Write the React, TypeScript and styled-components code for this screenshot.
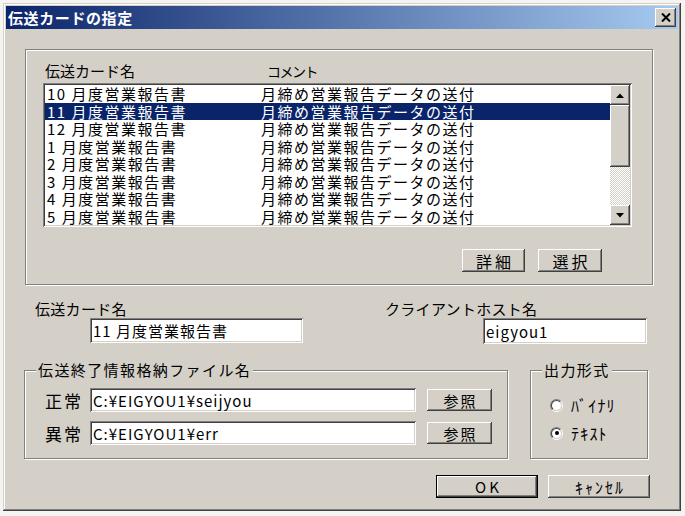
import React from 'react';
import styled, { createGlobalStyle, css } from 'styled-components';

const FACE = '#D4D0C8';
const SHADOW = '#808080';
const DARK = '#404040';
const SELECT = '#0A246A';
const FONT = `"Noto Sans CJK JP", "Noto Sans", sans-serif`;

const GlobalStyle = createGlobalStyle`
  html, body {
    margin: 0;
    padding: 0;
    background: #f4f4f2;
  }
  body {
    font-family: ${FONT};
    color: #000;
  }
  * {
    box-sizing: border-box;
  }
`;

const raised = css`
  box-shadow: inset -1px -1px ${DARK}, inset 1px 1px #fff,
    inset -2px -2px ${SHADOW}, inset 2px 2px ${FACE};
`;

const sunken = css`
  box-shadow: inset 1px 1px ${SHADOW}, inset -1px -1px #fff,
    inset 2px 2px ${DARK}, inset -2px -2px ${FACE};
`;

const Window = styled.div`
  margin: 3px 0 0 3px;
  width: 678px;
  height: 508px;
  padding: 3px;
  background: ${FACE};
  box-shadow: inset -1px -1px ${DARK}, inset 1px 1px ${FACE},
    inset -2px -2px ${SHADOW}, inset 2px 2px #fff;
  display: flex;
  flex-direction: column;
`;

const TitleBar = styled.div`
  height: 23px;
  padding: 0 2px;
  display: flex;
  align-items: center;
  justify-content: space-between;
  background: linear-gradient(90deg, ${SELECT} 0%, #A6CAF0 100%);
`;

const TitleText = styled.span`
  color: #fff;
  font-size: 15px;
  font-weight: 700;
  letter-spacing: 0.6px;
  line-height: 23px;
`;

const CloseButton = styled.div`
  width: 21px;
  height: 19px;
  background: ${FACE};
  ${raised};
  display: flex;
  align-items: center;
  justify-content: center;
`;

const Client = styled.div`
  flex: 1;
  display: flex;
  flex-direction: column;
`;

const Group = styled.div<{ $w: number; $h: number }>`
  position: relative;
  width: ${({ $w }) => $w}px;
  height: ${({ $h }) => $h}px;
  border: 1px solid ${SHADOW};
  box-shadow: inset 1px 1px #fff, 1px 1px #fff;
`;

const Legend = styled.span`
  position: absolute;
  top: -10px;
  left: 11px;
  padding: 0 2px;
  background: ${FACE};
  font-size: 15px;
  line-height: 18px;
  letter-spacing: 1.4px;
`;

const TopGroup = styled(Group)`
  margin: 20px 0 0 19px;
  padding: 12px 0 0 17px;
`;

const ListHeader = styled.div`
  display: flex;
  height: 18px;
  margin-bottom: 3px;
  padding-left: 2px;
  font-size: 15px;
  line-height: 18px;
`;

const HeaderCell = styled.span<{ $w?: number; $narrow?: boolean }>`
  width: ${({ $w }) => ($w ? `${$w}px` : 'auto')};
  white-space: nowrap;
  ${({ $narrow }) =>
    $narrow &&
    css`
      font-size: 14px;
      letter-spacing: -1.5px;
    `}
`;

const ListBox = styled.div`
  width: 589px;
  height: 144px;
  padding: 2px;
  background: #fff;
  ${sunken};
  display: flex;
`;

const Rows = styled.div`
  flex: 1;
  overflow: hidden;
`;

const Row = styled.div<{ $selected?: boolean }>`
  height: 17.5px;
  display: flex;
  align-items: center;
  font-size: 15px;
  line-height: 17.5px;
  letter-spacing: 1.5px;
  white-space: nowrap;
  background: ${({ $selected }) => ($selected ? SELECT : 'transparent')};
  color: ${({ $selected }) => ($selected ? '#fff' : '#000')};
`;

const Cell = styled.span<{ $w?: number }>`
  width: ${({ $w }) => ($w ? `${$w}px` : 'auto')};
  padding-left: 2px;
`;

const ScrollBar = styled.div`
  width: 20px;
  display: flex;
  flex-direction: column;
`;

const ScrollPart = styled.div<{ $h: number }>`
  height: ${({ $h }) => $h}px;
  background: ${FACE};
  ${raised};
  display: flex;
  align-items: center;
  justify-content: center;
`;

const ScrollTrack = styled.div`
  flex: 1;
  background: repeating-conic-gradient(#fff 0 25%, ${FACE} 0 50%) 0 0 / 2px
    2px;
`;

const ButtonRow = styled.div<{ $gap: number; $right: number; $top: number }>`
  display: flex;
  justify-content: flex-end;
  gap: ${({ $gap }) => $gap}px;
  margin-top: ${({ $top }) => $top}px;
  padding-right: ${({ $right }) => $right}px;
`;

const Button = styled.button<{
  $w: number;
  $h: number;
  $size?: number;
  $spacing?: number;
  $default?: boolean;
}>`
  width: ${({ $w }) => $w}px;
  height: ${({ $h }) => $h}px;
  flex: none;
  padding: 0 0 0 ${({ $spacing }) => $spacing ?? 0}px;
  border: none;
  background: ${FACE};
  color: #000;
  font-family: ${FONT};
  font-size: ${({ $size }) => $size ?? 15}px;
  letter-spacing: ${({ $spacing }) => $spacing ?? 0}px;
  line-height: 1;
  ${raised};
  ${({ $default }) =>
    $default &&
    css`
      box-shadow: inset 0 0 0 1px #000, inset -2px -2px ${DARK},
        inset 2px 2px #fff, inset -3px -3px ${SHADOW},
        inset 3px 3px ${FACE};
    `}
`;

const FieldsRow = styled.div`
  display: flex;
  margin-top: 15px;
`;

const FieldCol = styled.div<{ $w?: number; $left?: number }>`
  width: ${({ $w }) => ($w ? `${$w}px` : 'auto')};
  margin-left: ${({ $left }) => $left ?? 0}px;
  display: flex;
  flex-direction: column;
  align-items: flex-start;
`;

const FieldLabel = styled.label`
  font-size: 15px;
  line-height: 18px;
  letter-spacing: 0.3px;
  white-space: nowrap;
`;

const TextBox = styled.input<{ $w: number; $h: number; $indent?: number }>`
  width: ${({ $w }) => $w}px;
  height: ${({ $h }) => $h}px;
  margin-left: ${({ $indent }) => $indent ?? 0}px;
  padding: 0 0 0 3px;
  border: none;
  outline: none;
  background: #fff;
  ${sunken};
  font-family: ${FONT};
  font-size: 15px;
  letter-spacing: 1px;
  color: #000;
`;

const BottomArea = styled.div`
  display: flex;
  margin: 26px 0 0 18px;
`;

const FileGroup = styled(Group)`
  padding: 17px 0 0 20px;
`;

const FileRow = styled.div<{ $top?: number }>`
  display: flex;
  align-items: center;
  height: 24px;
  margin-top: ${({ $top }) => $top ?? 0}px;
`;

const FileLabel = styled.span`
  width: 45px;
  font-size: 17px;
  letter-spacing: 2px;
`;

const FormatGroup = styled(Group)`
  margin-left: 22px;
  padding: 25px 0 0 19px;
`;

const RadioRow = styled.label<{ $top?: number }>`
  display: flex;
  align-items: center;
  gap: 8px;
  height: 18px;
  margin-top: ${({ $top }) => $top ?? 0}px;
  font-size: 16px;
  letter-spacing: 1.2px;
`;

const Radio = styled.span<{ $checked?: boolean }>`
  position: relative;
  width: 13px;
  height: 13px;
  flex: none;
  border-radius: 50%;
  border: 1px solid;
  border-color: ${SHADOW} #fff #fff ${SHADOW};
  &::before {
    content: '';
    position: absolute;
    inset: 0;
    border-radius: 50%;
    border: 1px solid;
    border-color: ${DARK} ${FACE} ${FACE} ${DARK};
    background: #fff;
  }
  &::after {
    content: '';
    position: absolute;
    left: 3.5px;
    top: 3.5px;
    width: 4px;
    height: 4px;
    border-radius: 50%;
    background: ${({ $checked }) => ($checked ? '#000' : 'transparent')};
  }
`;

const cards = [
  '10 月度営業報告書',
  '11 月度営業報告書',
  '12 月度営業報告書',
  '1 月度営業報告書',
  '2 月度営業報告書',
  '3 月度営業報告書',
  '4 月度営業報告書',
  '5 月度営業報告書',
];

function Arrow({ up }: { up?: boolean }) {
  return (
    <svg width="8" height="5" viewBox="0 0 8 5">
      <polygon points={up ? '0,5 8,5 4,0.5' : '0,0 8,0 4,4.5'} fill="#000" />
    </svg>
  );
}

export default function App() {
  return (
    <>
      <GlobalStyle />
      <Window>
        <TitleBar>
          <TitleText>伝送カードの指定</TitleText>
          <CloseButton>
            <svg width="10" height="9" viewBox="0 0 10 9">
              <path d="M1 0.5 L9 8.5 M9 0.5 L1 8.5" stroke="#000" strokeWidth="2" />
            </svg>
          </CloseButton>
        </TitleBar>
        <Client>
          <TopGroup $w={628} $h={236}>
            <ListHeader>
              <HeaderCell $w={222}>伝送カード名</HeaderCell>
              <HeaderCell $narrow>コメント</HeaderCell>
            </ListHeader>
            <ListBox>
              <Rows>
                {cards.map((name, i) => (
                  <Row key={name} $selected={i === 1}>
                    <Cell $w={214}>{name}</Cell>
                    <Cell>月締め営業報告データの送付</Cell>
                  </Row>
                ))}
              </Rows>
              <ScrollBar>
                <ScrollPart $h={20}>
                  <Arrow up />
                </ScrollPart>
                <ScrollPart $h={62} />
                <ScrollTrack />
                <ScrollPart $h={20}>
                  <Arrow />
                </ScrollPart>
              </ScrollBar>
            </ListBox>
            <ButtonRow $gap={13} $right={50} $top={22}>
              <Button $w={63} $h={23} $size={16} $spacing={3}>
                詳細
              </Button>
              <Button $w={64} $h={23} $size={16} $spacing={3}>
                選択
              </Button>
            </ButtonRow>
          </TopGroup>

          <FieldsRow>
            <FieldCol $w={350} $left={29}>
              <FieldLabel>伝送カード名</FieldLabel>
              <TextBox $w={213} $h={25} $indent={55} readOnly value="11 月度営業報告書" />
            </FieldCol>
            <FieldCol>
              <FieldLabel>クライアントホスト名</FieldLabel>
              <TextBox $w={164} $h={26} $indent={98} readOnly value="eigyou1" />
            </FieldCol>
          </FieldsRow>

          <BottomArea>
            <FileGroup $w={484} $h={89}>
              <Legend>伝送終了情報格納ファイル名</Legend>
              <FileRow>
                <FileLabel>正常</FileLabel>
                <TextBox $w={326} $h={24} readOnly value="C:¥EIGYOU1¥seijyou" />
                <Button $w={65} $h={22} $spacing={2} style={{ marginLeft: 11 }}>
                  参照
                </Button>
              </FileRow>
              <FileRow $top={9}>
                <FileLabel>異常</FileLabel>
                <TextBox $w={326} $h={24} readOnly value="C:¥EIGYOU1¥err" />
                <Button $w={65} $h={22} $spacing={2} style={{ marginLeft: 11 }}>
                  参照
                </Button>
              </FileRow>
            </FileGroup>
            <FormatGroup $w={118} $h={89}>
              <Legend>出力形式</Legend>
              <RadioRow>
                <Radio />
                ﾊﾞｲﾅﾘ
              </RadioRow>
              <RadioRow $top={10}>
                <Radio $checked />
                ﾃｷｽﾄ
              </RadioRow>
            </FormatGroup>
          </BottomArea>

          <ButtonRow $gap={10} $right={28} $top={16}>
            <Button $w={102} $h={23} $spacing={3} $default>
              OK
            </Button>
            <Button $w={102} $h={23} $size={16} $spacing={2}>
              ｷｬﾝｾﾙ
            </Button>
          </ButtonRow>
        </Client>
      </Window>
    </>
  );
}
